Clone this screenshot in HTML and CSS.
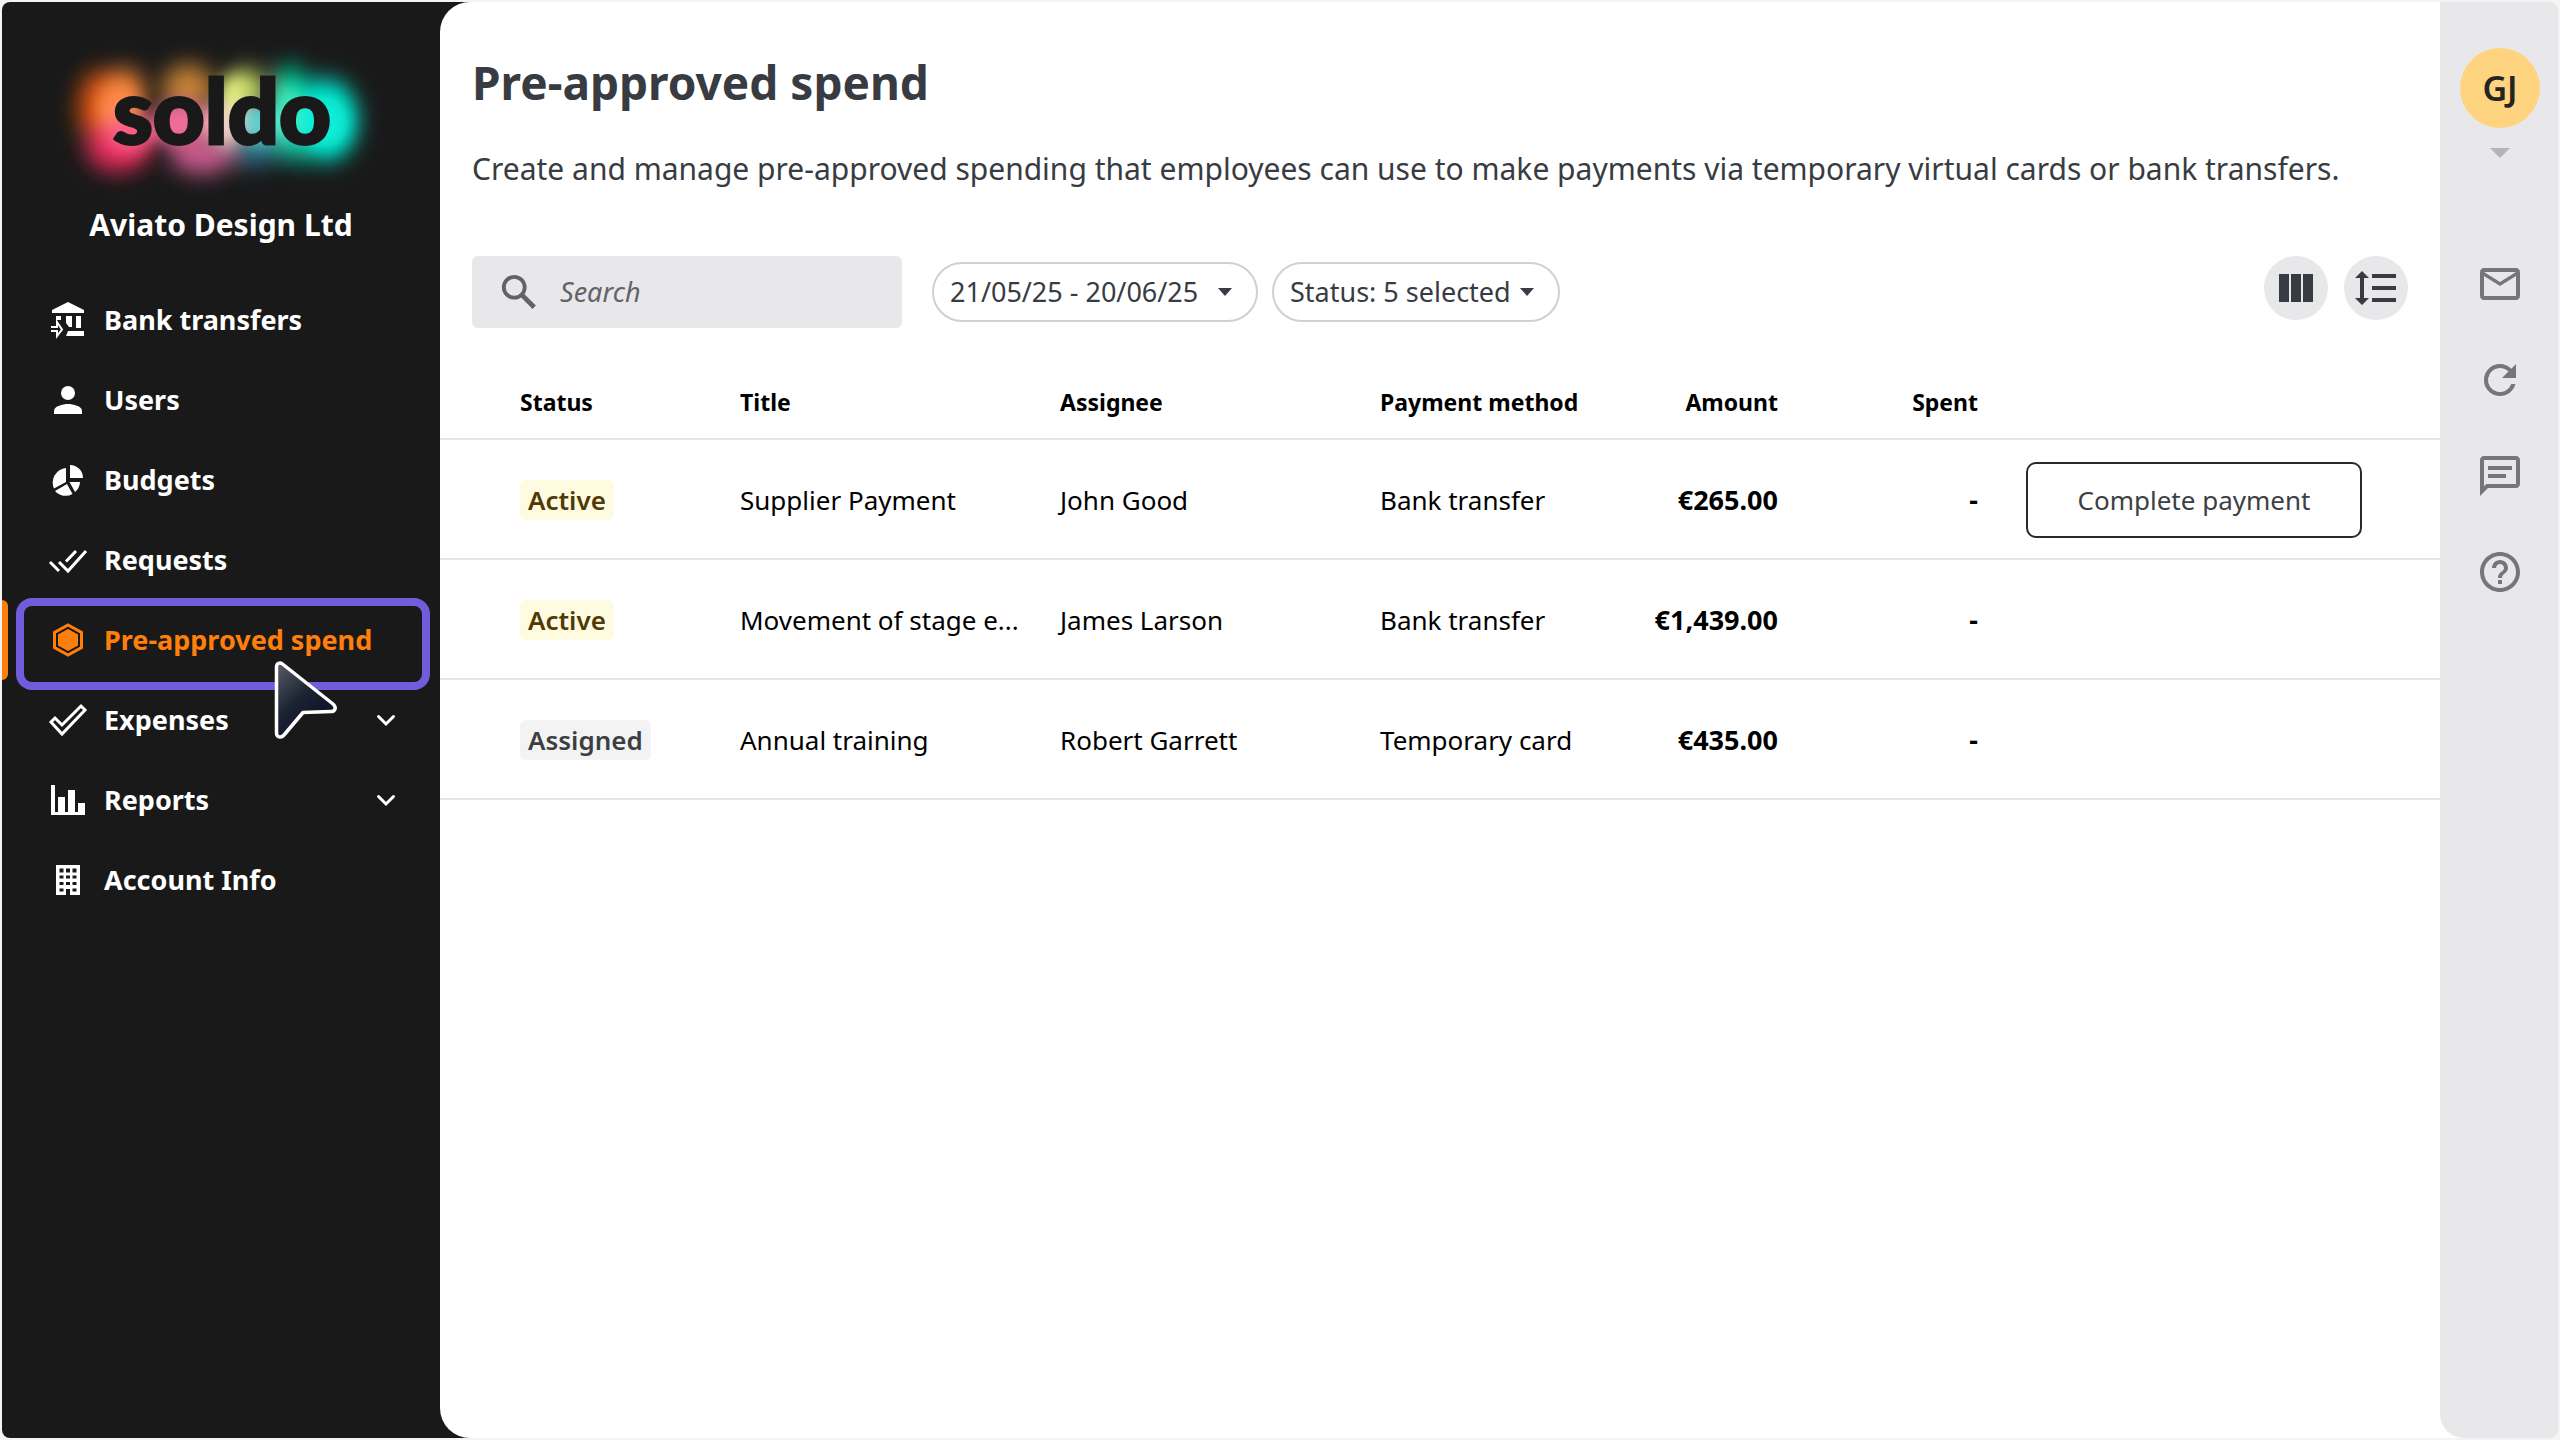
FILE: index.html
```html
<!DOCTYPE html>
<html lang="en">
<head>
<meta charset="utf-8">
<title>Pre-approved spend</title>
<meta name="viewport" content="width=device-width, initial-scale=1">
<link rel="stylesheet" href="styles.css">
</head>
<body>
<div class="app">
  <aside class="sidebar">
    <svg class="logo" viewBox="0 0 320 160" role="img" aria-label="soldo">
      <defs>
        <filter id="soft" x="-50%" y="-50%" width="200%" height="200%"><feGaussianBlur stdDeviation="11"/></filter>
        <filter id="softer" x="-50%" y="-50%" width="200%" height="200%"><feGaussianBlur stdDeviation="8"/></filter>
      </defs>
      <g filter="url(#soft)">
        <ellipse cx="42" cy="72" rx="22" ry="38" fill="#d8500f"/>
        <ellipse cx="60" cy="112" rx="32" ry="24" fill="#e02a58"/>
        <ellipse cx="66" cy="56" rx="20" ry="24" fill="#f08030"/>
        <ellipse cx="130" cy="52" rx="26" ry="24" fill="#c58234"/>
        <ellipse cx="144" cy="118" rx="32" ry="20" fill="#c85a8c"/>
        <ellipse cx="188" cy="54" rx="18" ry="22" fill="#c8d860"/>
        <ellipse cx="196" cy="112" rx="26" ry="18" fill="#2a6f86"/>
        <ellipse cx="232" cy="52" rx="18" ry="24" fill="#06b888"/>
        <ellipse cx="268" cy="84" rx="32" ry="42" fill="#06dcc4"/>
        <ellipse cx="240" cy="106" rx="24" ry="20" fill="#08b496"/>
      </g>
      <g filter="url(#softer)">
        <ellipse cx="62" cy="74" rx="22" ry="22" fill="#ff8a50"/>
        <ellipse cx="72" cy="98" rx="26" ry="18" fill="#ff5a86"/>
        <ellipse cx="124" cy="88" rx="30" ry="24" fill="#ee6c98"/>
        <ellipse cx="168" cy="86" rx="18" ry="26" fill="#f2cfc8"/>
        <ellipse cx="176" cy="58" rx="12" ry="18" fill="#e8f484"/>
        <ellipse cx="202" cy="88" rx="20" ry="22" fill="#60cfd0"/>
        <ellipse cx="230" cy="78" rx="14" ry="30" fill="#40f0c0"/>
        <ellipse cx="264" cy="86" rx="26" ry="26" fill="#10eed8"/>
      </g>
      <text x="164" y="108" text-anchor="middle" class="logo-word">soldo</text>
    </svg>
    <p class="company">Aviato Design Ltd</p>
    <nav class="nav" aria-label="Main">
      <a class="nav-item" href="#">
        <svg class="icon" viewBox="0 0 40 40"><path fill="currentColor" d="M20 2 36 10v3H4v-3zM18 16h6v11l-3 0-3-4zM28 16h5v12h-5zM8 16h5v4h-5zM20 31h16v5H18z"/><path fill="none" stroke="currentColor" stroke-width="2" d="M3 27h6v-5l5 7.500-5 6.500v-5H3"/></svg>
        <span>Bank transfers</span>
      </a>
      <a class="nav-item" href="#">
        <svg class="icon" viewBox="0 0 40 40"><circle cx="20" cy="13" r="7" fill="currentColor"/><path fill="currentColor" d="M6 34v-3c0-5 9-7 14-7s14 2 14 7v3z"/></svg>
        <span>Users</span>
      </a>
      <a class="nav-item" href="#">
        <svg class="icon" viewBox="0 0 40 40"><path fill="currentColor" d="M22 5a13 13 0 0 1 13 13H22zM18 8v14L6 28.500A14.500 14.500 0 0 1 18 8zM19 24l5.500 10A14 14 0 0 1 7 31zM21.500 22H32a14 14 0 0 1-5 10z"/></svg>
        <span>Budgets</span>
      </a>
      <a class="nav-item" href="#">
        <svg class="icon" viewBox="0 0 40 40"><path fill="none" stroke="currentColor" stroke-width="3" d="M2 22l9 9M11 22l9 9L38 11M18 21.500 28 11"/></svg>
        <span>Requests</span>
      </a>
      <a class="nav-item active" href="#" aria-current="page">
        <svg class="icon" viewBox="0 0 40 40"><path fill="none" stroke="currentColor" stroke-width="3" d="M20 5l13.500 7.500v15L20 35 6.500 27.500v-15z"/><path fill="currentColor" d="M20 9l10 5.500v11L20 31l-10-5.500v-11z"/></svg>
        <span>Pre-approved spend</span>
      </a>
      <a class="nav-item" href="#">
        <svg class="icon" viewBox="0 0 40 40"><path fill="none" stroke="currentColor" stroke-width="3" d="M3 22l4-4 7 7L33 6l4 4L14 34z"/></svg>
        <span>Expenses</span>
        <svg class="chevron" viewBox="0 0 20 20"><path fill="none" stroke="currentColor" stroke-width="3" stroke-linecap="round" d="M2.500 6.500 10 14l7.500-7.500"/></svg>
      </a>
      <a class="nav-item" href="#">
        <svg class="icon" viewBox="0 0 40 40"><path fill="currentColor" d="M3 5h4v27h3V17h7v15h3V10h7v22h3v-9h7v12H3z"/></svg>
        <span>Reports</span>
        <svg class="chevron" viewBox="0 0 20 20"><path fill="none" stroke="currentColor" stroke-width="3" stroke-linecap="round" d="M2.500 6.500 10 14l7.500-7.500"/></svg>
      </a>
      <a class="nav-item" href="#">
        <svg class="icon" viewBox="0 0 40 40"><path fill="currentColor" fill-rule="evenodd" d="M8 5h24v30H8zM11.500 8.500v4h4v-4zM18 8.500v4h4v-4zM24.500 8.500v4h4v-4zM11.500 15.500v3h4v-3zM18 15.500v3h4v-3zM24.500 15.500v3h4v-3zM11.500 22v3h4v-3zM18 22v3h4v-3zM24.500 22v3h4v-3zM11.500 28.500v3h4v-3zM24.500 28.500v3h4v-3zM18 29v6h4v-6z"/></svg>
        <span>Account Info</span>
      </a>
    </nav>
    <svg class="cursor" viewBox="0 0 68 84" aria-hidden="true">
      <defs><linearGradient id="cur" x1="0" y1="0" x2=".7" y2="1"><stop offset="0" stop-color="#5a5d64"/><stop offset=".5" stop-color="#1c2434"/><stop offset="1" stop-color="#050c1e"/></linearGradient></defs>
      <path d="M6.500 8C6.500 4 10 3 12.500 5L63 45c4 3.500 2 7.500-2 7.500l-28 1L14 76C11 79.500 6.500 78 6.500 74z" fill="url(#cur)" stroke="#fff" stroke-width="3.500" stroke-linejoin="round"/>
    </svg>
  </aside>

  <main class="main">
    <header class="head">
      <h1>Pre-approved spend</h1>
      <p>Create and manage pre-approved spending that employees can use to make payments via temporary virtual cards or bank transfers.</p>
    </header>
    <div class="toolbar">
      <label class="search">
        <svg viewBox="0 0 40 40" aria-hidden="true"><circle cx="15" cy="15" r="11" fill="none" stroke="currentColor" stroke-width="4"/><path d="M23 23l13 13" stroke="currentColor" stroke-width="5"/></svg>
        <input type="search" placeholder="Search" aria-label="Search">
      </label>
      <button class="pill pill-date" type="button">21/05/25 - 20/06/25<svg viewBox="0 0 14 10"><path fill="currentColor" d="M0 1h14L7 9z"/></svg></button>
      <button class="pill pill-status" type="button">Status: 5 selected<svg viewBox="0 0 14 10"><path fill="currentColor" d="M0 1h14L7 9z"/></svg></button>
      <div class="tools">
        <button class="round" type="button" aria-label="Columns"><svg viewBox="0 0 64 64"><path fill="currentColor" d="M15 18h10v28H15zM27 18h10v28H27zM39 18h10v28H39z"/></svg></button>
        <button class="round" type="button" aria-label="Row height"><svg viewBox="0 0 64 64"><path fill="currentColor" d="M18 15l7 7h-5v20h5l-7 7-7-7h5V22h-5zM28 18h24v4H28zM28 30h24v4H28zM28 42h24v4H28z"/></svg></button>
      </div>
    </div>
    <table class="table">
      <colgroup><col class="c-status"><col class="c-wide"><col class="c-wide"><col class="c-method"><col class="c-amount"><col class="c-spent"><col></colgroup>
      <thead>
        <tr><th>Status</th><th>Title</th><th>Assignee</th><th>Payment method</th><th class="num">Amount</th><th class="num">Spent</th><td></td></tr>
      </thead>
      <tbody>
        <tr><td><span class="tag tag-active">Active</span></td><td>Supplier Payment</td><td>John Good</td><td>Bank transfer</td><td class="num strong">€265.00</td><td class="num strong">-</td><td class="action"><button class="outline" type="button">Complete payment</button></td></tr>
        <tr><td><span class="tag tag-active">Active</span></td><td>Movement of stage e...</td><td>James Larson</td><td>Bank transfer</td><td class="num strong">€1,439.00</td><td class="num strong">-</td><td></td></tr>
        <tr><td><span class="tag">Assigned</span></td><td>Annual training</td><td>Robert Garrett</td><td>Temporary card</td><td class="num strong">€435.00</td><td class="num strong">-</td><td></td></tr>
      </tbody>
    </table>
  </main>

  <aside class="rail">
    <button class="account" type="button" aria-label="Account GJ">
      <span class="avatar">GJ</span>
      <svg viewBox="0 0 20 10"><path fill="#b4b4b6" d="M0 0h20L10 10z"/></svg>
    </button>
    <button class="rail-btn" type="button" aria-label="Messages"><svg viewBox="0 0 24 24"><path fill="currentColor" d="M20 4H4c-1.100 0-2 .9-2 2v12c0 1.100.9 2 2 2h16c1.100 0 2-.9 2-2V6c0-1.100-.9-2-2-2zm0 14H4V8l8 5 8-5v10zm-8-7L4 6h16l-8 5z"/></svg></button>
    <button class="rail-btn" type="button" aria-label="Refresh"><svg viewBox="0 0 24 24"><path fill="currentColor" d="M17.650 6.350A7.960 7.960 0 0 0 12 4a8 8 0 1 0 7.730 10h-2.080A6 6 0 1 1 12 6c1.660 0 3.140.69 4.220 1.780L13 11h7V4l-2.350 2.350z"/></svg></button>
    <button class="rail-btn" type="button" aria-label="Chat"><svg viewBox="0 0 24 24"><path fill="currentColor" d="M4 4h16v12H5.170L4 17.170V4m0-2c-1.100 0-2 .9-2 2v18l4-4h14c1.100 0 2-.9 2-2V4c0-1.100-.9-2-2-2H4zm2 9h9v2H6v-2zm0-4h12v2H6V7z"/></svg></button>
    <button class="rail-btn" type="button" aria-label="Help"><svg viewBox="0 0 24 24"><path fill="currentColor" d="M11 18h2v-2h-2v2zm1-16C6.480 2 2 6.480 2 12s4.480 10 10 10 10-4.480 10-10S17.520 2 12 2zm0 18c-4.410 0-8-3.590-8-8s3.590-8 8-8 8 3.590 8 8-3.590 8-8 8zm0-14c-2.210 0-4 1.790-4 4h2c0-1.100.9-2 2-2s2 .9 2 2c0 2-3 1.750-3 5h2c0-2.250 3-2.500 3-5 0-2.210-1.790-4-4-4z"/></svg></button>
  </aside>
</div>
</body>
</html>
```
FILE: styles.css
```css
* { box-sizing: border-box; }
body {
  margin: 0;
  padding: 2px;
  min-height: 100vh;
  display: flex;
  background: #f4f4f5;
  font: 27px/36px "Noto Sans", "Open Sans", sans-serif;
  color: #000;
}
button, input { font: inherit; color: inherit; margin: 0; }
button { cursor: pointer; background: none; border: 0; padding: 0; }
svg { display: block; flex: none; }
h1, p { margin: 0; }

.app {
  flex: 1;
  display: grid;
  grid-template-columns: 438px minmax(0, 1fr) 118px;
  background: linear-gradient(90deg, #191919 50%, #fff 50%);
  border-radius: 8px;
  overflow: hidden;
}

/* Sidebar */
.sidebar { position: relative; color: #fff; padding-top: 34px; }
.logo { width: 320px; height: 160px; margin-left: 56px; overflow: visible; }
.logo-word { font: 900 90px Lato, sans-serif; fill: #191919; stroke: #191919; stroke-width: 3px; }
.company { text-align: center; font-size: 30px; font-weight: 700; line-height: 40px; margin-top: 9px; }
.nav { display: flex; flex-direction: column; margin-top: 35px; font-weight: 700; }
.nav-item {
  position: relative;
  display: flex;
  align-items: center;
  gap: 16px;
  height: 80px;
  padding: 0 44px 0 46px;
  color: #fff;
  text-decoration: none;
}
.icon { width: 40px; height: 40px; }
.chevron { width: 20px; height: 20px; margin-left: auto; }
.active { color: #ff7f0a; }
.active::before {
  content: "";
  position: absolute;
  left: 0; top: 0;
  width: 6px; height: 80px;
  background: #ff7f0a;
  border-radius: 0 6px 6px 0;
}
.active::after {
  content: "";
  position: absolute;
  inset: -2px 10px -10px 14px;
  border: 8px solid #735cdc;
  border-radius: 16px;
}
.cursor { position: absolute; left: 268px; top: 657px; width: 68px; height: 84px; }

/* Main */
.main { background: #fff; border-radius: 30px 0 0 30px; padding-top: 45px; }
.head { padding: 0 32px; color: #383c42; }
.head h1 { font-size: 46px; line-height: 70px; font-weight: 700; }
.head p { font-size: 30px; line-height: 40px; margin-top: 32px; }
.toolbar { display: flex; align-items: center; gap: 14px; padding: 0 32px; margin-top: 67px; }
.search {
  display: flex;
  align-items: center;
  gap: 22px;
  width: 430px; height: 72px;
  margin-right: 16px;
  padding: 0 28px;
  background: #e8e8ea;
  border-radius: 6px;
  color: #616366;
}
.search svg { width: 38px; height: 38px; }
.search input { flex: 1; min-width: 0; border: 0; padding: 0; background: none; outline: 0; font-style: italic; }
.search input::placeholder { color: #616366; opacity: 1; }
.pill {
  display: flex;
  align-items: center;
  justify-content: space-between;
  height: 60px;
  padding: 0 24px 0 16px;
  border: 2px solid #d0d0d2;
  border-radius: 30px;
  color: #383c42;
  white-space: nowrap;
}
.pill svg { width: 14px; height: 10px; }
.pill-date { width: 326px; }
.pill-status { width: 288px; }
.tools { display: flex; gap: 16px; margin-left: auto; align-self: flex-start; }
.round { width: 64px; height: 64px; border-radius: 50%; background: #e8e8ea; color: #383c42; }

.table { width: 100%; table-layout: fixed; border-collapse: collapse; margin-top: 36px; font-size: 26px; }
.c-status { width: 284px; }
.c-wide { width: 320px; }
.c-method { width: 284px; }
.c-amount { width: 146px; }
.c-spent { width: 200px; }
.table th, .table td { padding: 2px 0 0 16px; text-align: left; border-bottom: 2px solid #e6e6e7; height: 120px; white-space: nowrap; }
.table thead th, .table thead td { height: 75px; font-size: 23px; }
.table tr > :first-child { padding-left: 80px; }
.table .num { text-align: right; padding: 2px 16px 0 0; }
.table .strong { font-weight: 700; font-size: 27px; }
.table .action { padding-left: 32px; }
.tag { display: inline-block; line-height: 40px; padding: 0 8px; border-radius: 6px; background: #f3f3f4; color: #3c3f42; font-weight: 600; }
.tag-active { background: #fffbe0; color: #4f3a06; }
.outline { display: block; width: 336px; height: 76px; border: 2px solid #2a2a2c; border-radius: 10px; color: #3c3f44; }

/* Right rail */
.rail {
  display: flex;
  flex-direction: column;
  align-items: center;
  gap: 48px;
  padding: 46px 0 0 2px;
  background: #e8e8ea;
  color: #747679;
  border-radius: 0 0 0 24px;
}
.account { display: flex; flex-direction: column; align-items: center; gap: 20px; margin-bottom: 54px; }
.avatar { width: 80px; height: 80px; border-radius: 50%; background: #ffd480; color: #25251e; font-size: 34px; font-weight: 600; line-height: 80px; }
.account svg { width: 20px; height: 10px; }
.rail-btn svg { width: 48px; height: 48px; }
```
